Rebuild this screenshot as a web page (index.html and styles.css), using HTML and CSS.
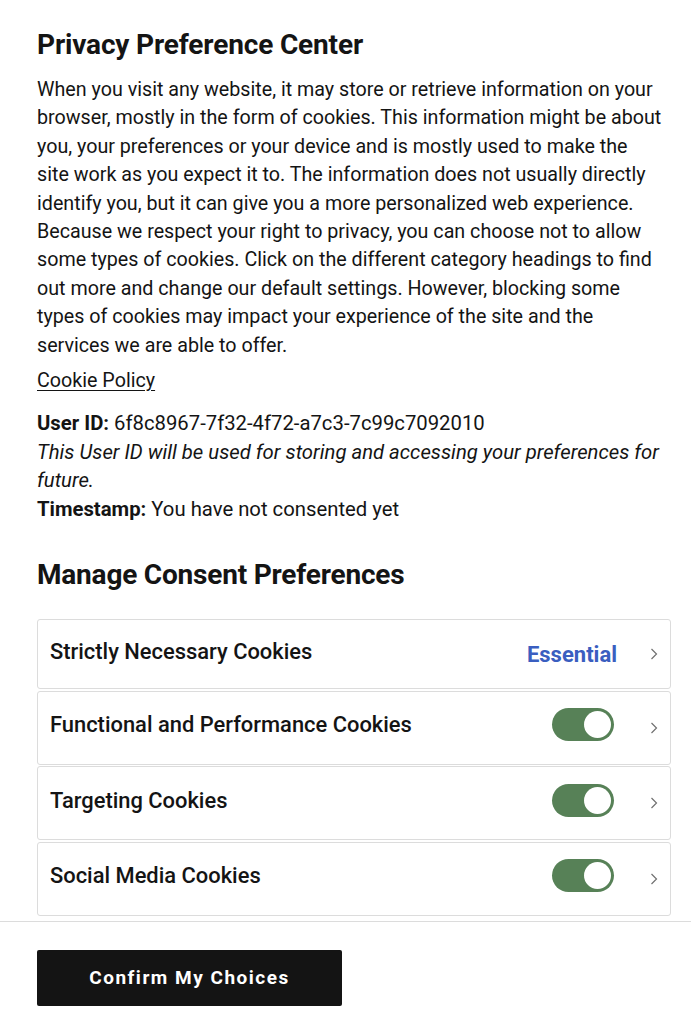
FILE: index.html
```html
<!DOCTYPE html>
<html lang="en">
<head>
<meta charset="utf-8">
<title>Privacy Preference Center</title>
<link rel="stylesheet" href="styles.css">
</head>
<body>
<div class="panel">
  <div class="content">
    <h2 class="title">Privacy Preference Center</h2>
    <p class="desc">When you visit any website, it may store or retrieve information on your<br>browser, mostly in the form of cookies. This information might be about<br>you, your preferences or your device and is mostly used to make the<br>site work as you expect it to. The information does not usually directly<br>identify you, but it can give you a more personalized web experience.<br>Because we respect your right to privacy, you can choose not to allow<br>some types of cookies. Click on the different category headings to find<br>out more and change our default settings. However, blocking some<br>types of cookies may impact your experience of the site and the<br>services we are able to offer.</p>
    <a class="policy" href="#">Cookie Policy</a>
    <div class="userinfo">
      <div><b>User ID:</b> 6f8c8967-7f32-4f72-a7c3-7c99c7092010</div>
      <div class="note">This User ID will be used for storing and accessing your preferences for future.</div>
      <div><b>Timestamp:</b> You have not consented yet</div>
    </div>
    <h3 class="subtitle">Manage Consent Preferences</h3>
    <div class="cards">
      <div class="card card-first">
        <span class="card-name">Strictly Necessary Cookies</span>
        <span class="essential">Essential</span>
        <svg class="chev" viewBox="0 0 8 14" width="8" height="14"><path d="M1.5 2 L6.5 7 L1.5 12" fill="none" stroke="#707070" stroke-width="1.2"/></svg>
      </div>
      <div class="card">
        <span class="card-name">Functional and Performance Cookies</span>
        <span class="toggle"><span class="knob"></span></span>
        <svg class="chev" viewBox="0 0 8 14" width="8" height="14"><path d="M1.5 2 L6.5 7 L1.5 12" fill="none" stroke="#707070" stroke-width="1.2"/></svg>
      </div>
      <div class="card">
        <span class="card-name">Targeting Cookies</span>
        <span class="toggle"><span class="knob"></span></span>
        <svg class="chev" viewBox="0 0 8 14" width="8" height="14"><path d="M1.5 2 L6.5 7 L1.5 12" fill="none" stroke="#707070" stroke-width="1.2"/></svg>
      </div>
      <div class="card">
        <span class="card-name">Social Media Cookies</span>
        <span class="toggle"><span class="knob"></span></span>
        <svg class="chev" viewBox="0 0 8 14" width="8" height="14"><path d="M1.5 2 L6.5 7 L1.5 12" fill="none" stroke="#707070" stroke-width="1.2"/></svg>
      </div>
    </div>
  </div>
  <div class="footer">
    <button class="confirm">Confirm My Choices</button>
  </div>
</div>
</body>
</html>
```
FILE: styles.css
```css
html, body {
  margin: 0;
  padding: 0;
  background: #ffffff;
}
body {
  font-family: Roboto, "Liberation Sans", Arial, sans-serif;
  color: #141414;
  width: 691px;
  height: 1024px;
  overflow: hidden;
}
.content {
  padding: 28px 20px 0 37px;
}
.title {
  margin: 0 0 14px 0;
  font-size: 28px;
  line-height: 34px;
  font-weight: 700;
  letter-spacing: -0.15px;
}
.desc {
  margin: 0 0 7px 0;
  font-size: 19.7px;
  line-height: 28.4px;
}
.policy {
  display: inline-block;
  font-size: 19.7px;
  line-height: 28.4px;
  color: #141414;
  text-decoration: underline;
  text-underline-offset: 3px;
}
.userinfo {
  margin-top: 14px;
  font-size: 20.3px;
  line-height: 28.5px;
}
.userinfo b {
  font-weight: 700;
}
.note {
  font-style: italic;
}
.subtitle {
  margin: 35px 0 0 0;
  font-size: 28px;
  line-height: 34px;
  font-weight: 700;
  letter-spacing: -0.2px;
}
.cards {
  margin-top: 27px;
  display: flex;
  flex-direction: column;
  gap: 1.5px;
}
.card {
  display: flex;
  align-items: center;
  height: 74px;
  box-sizing: border-box;
  border: 1px solid #dcdcdc;
  border-radius: 3px;
  padding: 0 12px 0 12px;
}
.card-first {
  height: 70px;
}
.card-name {
  flex: 1;
  font-size: 21.9px;
  font-weight: 500;
  margin-top: -6px;
}
.essential {
  color: #3a5ec0;
  font-size: 22px;
  font-weight: 700;
  margin-right: 33px;
}
.toggle {
  position: relative;
  width: 62px;
  height: 33px;
  border-radius: 17px;
  background: #578157;
  margin-right: 36px;
  margin-top: -6px;
}
.knob {
  position: absolute;
  right: 3px;
  top: 3px;
  width: 27px;
  height: 27px;
  border-radius: 50%;
  background: #ffffff;
}
.chev {
  display: block;
}
.footer {
  margin-top: 5px;
  border-top: 1px solid #dcdcdc;
  padding: 28px 0 0 37px;
}
.confirm {
  width: 305px;
  height: 56px;
  background: #141414;
  color: #ffffff;
  border: none;
  border-radius: 2px;
  font-family: Roboto, "Liberation Sans", Arial, sans-serif;
  font-size: 19px;
  font-weight: 700;
  letter-spacing: 1.5px;
}
```
